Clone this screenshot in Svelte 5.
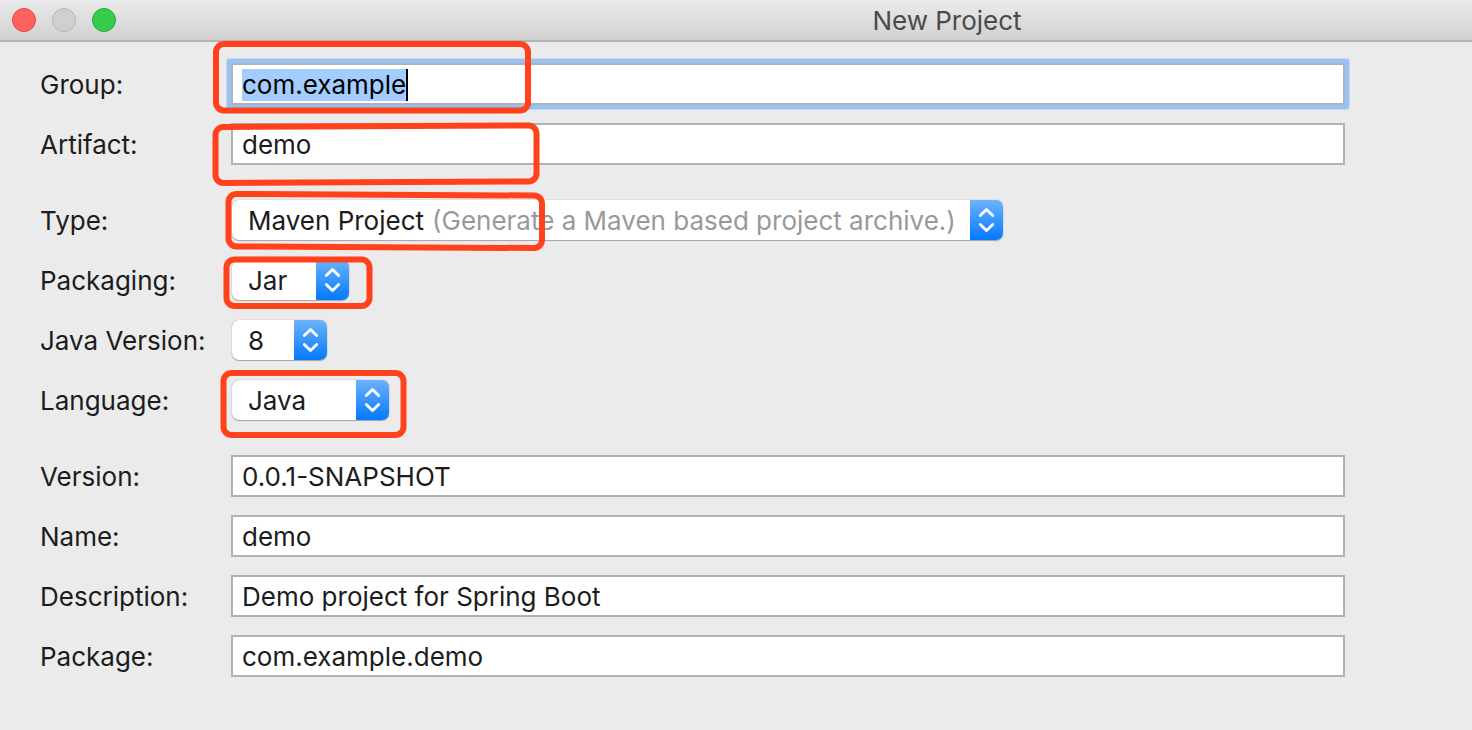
<script>
  import { onMount } from 'svelte';

  let groupInput;

  const choices = [
    { id: 'type', label: 'Type:', value: 'Maven Project', hint: '(Generate a Maven based project archive.)', width: 738 },
    { id: 'packaging', label: 'Packaging:', value: 'Jar', width: 84 },
    { id: 'java-version', label: 'Java Version:', value: '8', width: 62 },
    { id: 'language', label: 'Language:', value: 'Java', width: 124 }
  ];

  const details = [
    { id: 'version', label: 'Version:', value: '0.0.1-SNAPSHOT' },
    { id: 'name', label: 'Name:', value: 'demo' },
    { id: 'description', label: 'Description:', value: 'Demo project for Spring Boot' },
    { id: 'package', label: 'Package:', value: 'com.example.demo' }
  ];

  onMount(() => {
    groupInput.focus();
    groupInput.select();
  });
</script>

<div class="window">
  <header>
    <div class="lights">
      <button class="close" aria-label="Close"></button>
      <button class="minimize" aria-label="Minimize" disabled></button>
      <button class="zoom" aria-label="Zoom"></button>
    </div>
    <h1>New Project</h1>
  </header>

  <form>
    <section>
      <div class="row">
        <label for="group">Group:</label>
        <div class="field focused">
          <input id="group" class="fit" type="text" value="com.example" bind:this={groupInput} />
          <span class="caret"></span>
        </div>
      </div>
      <div class="row">
        <label for="artifact">Artifact:</label>
        <div class="field"><input id="artifact" type="text" value="demo" /></div>
      </div>
    </section>

    <section>
      {#each choices as choice}
        <div class="row">
          <label for={choice.id}>{choice.label}</label>
          <div class="popup">
            <div class="choice" style="width: {choice.width}px">
              <select id={choice.id} class:wide={!choice.hint}>
                <option>{choice.value}</option>
              </select>
              {#if choice.hint}<span class="hint">{choice.hint}</span>{/if}
            </div>
            <svg class="arrows" viewBox="0 0 33 40" aria-hidden="true">
              <path d="M10.300 15.600 L16.500 9.600 L22.700 15.600 M10.300 24.400 L16.500 30.400 L22.700 24.400" />
            </svg>
          </div>
        </div>
      {/each}
    </section>

    <section>
      {#each details as item}
        <div class="row">
          <label for={item.id}>{item.label}</label>
          <div class="field"><input id={item.id} type="text" value={item.value} /></div>
        </div>
      {/each}
    </section>
  </form>

  <svg class="marks" width="560" height="450" viewBox="0 0 560 450" aria-hidden="true">
    <path d="M224 44 H520 A8 8 0 0 1 528 52 V102.500 A8 8 0 0 1 520 110.500 H224 A8 8 0 0 1 216 102.500 V52 A8 8 0 0 1 224 44 Z" />
    <path d="M223.500 127 L528.500 125.500 A8 8 0 0 1 536.500 133.500 V173.500 A8 8 0 0 1 528.500 181.500 L223.500 183 A8 8 0 0 1 215.500 175 V135 A8 8 0 0 1 223.500 127 Z" />
    <path d="M236.500 194 L534 195.500 A8 8 0 0 1 542 203.500 V240 A8 8 0 0 1 534 248 L236.500 246.500 A8 8 0 0 1 228.500 238.500 V202 A8 8 0 0 1 236.500 194 Z" />
    <path d="M234.500 259.500 H361.500 A8 8 0 0 1 369.500 267.500 V298 A8 8 0 0 1 361.500 306 H234.500 A8 8 0 0 1 226.500 298 V267.500 A8 8 0 0 1 234.500 259.500 Z" />
    <path d="M231.500 373 H395.500 A8 8 0 0 1 403.500 381 V427 A8 8 0 0 1 395.500 435 H231.500 A8 8 0 0 1 223.500 427 V381 A8 8 0 0 1 231.500 373 Z" />
  </svg>
</div>

<style>
  :global(body) {
    margin: 0;
    background: #ebebeb;
  }

  .window {
    position: relative;
    min-height: 100vh;
    background: #ebebeb;
    color: #1c1c1c;
    font: 26px/32px Inter, 'Liberation Sans', sans-serif;
  }

  header {
    box-sizing: border-box;
    height: 42px;
    display: flex;
    align-items: center;
    padding-left: 12px;
    background: linear-gradient(#ebebeb, #d1d1d1);
    border-bottom: 2px solid #b3b3b3;
  }

  .lights {
    display: flex;
    gap: 16px;
  }

  .lights button {
    box-sizing: border-box;
    width: 24px;
    height: 24px;
    padding: 0;
    border: 1px solid #b4b4b4;
    border-radius: 50%;
    background: #d0d0d0;
  }

  .lights .close {
    background: #ff625c;
    border-color: #e2463f;
  }

  .lights .zoom {
    background: #35cc4b;
    border-color: #27aa35;
  }

  h1 {
    flex: 1;
    margin: 0;
    padding: 2px 0 0 306px;
    text-align: center;
    font-size: 26px;
    font-weight: 400;
    color: #4a4a4a;
  }

  form {
    display: flex;
    flex-direction: column;
    gap: 34px;
    padding: 21px 127px 40px 40px;
  }

  section {
    display: flex;
    flex-direction: column;
    gap: 18px;
  }

  .row {
    display: grid;
    grid-template-columns: 191px 1fr;
    align-items: center;
    min-height: 42px;
  }

  label {
    padding-top: 2px;
  }

  .field {
    box-sizing: border-box;
    display: flex;
    align-items: center;
    height: 42px;
    padding: 2px 9px 0;
    border: 2px solid #b2b2b2;
    background: #fff;
  }

  .focused {
    box-shadow: 0 0 0 4px #96c3f5, 0 0 0 5px #c0d8f1;
    border-radius: 1px;
  }

  input,
  select {
    padding: 0;
    border: 0;
    outline: 0;
    background: transparent;
    color: inherit;
    font: inherit;
  }

  input {
    flex: 1;
    min-width: 0;
    height: 32px;
  }

  .fit {
    flex: none;
    field-sizing: content;
    color: #000;
    caret-color: transparent;
  }

  .fit::selection {
    background: #a3cdff;
    color: #000;
  }

  .caret {
    width: 2px;
    height: 32px;
    background: #000;
  }

  .popup {
    display: flex;
    justify-self: start;
    height: 40px;
    margin-left: 1px;
    border-radius: 7px;
    overflow: hidden;
    background: #fff;
    box-shadow: 0 0 1px #777, 0 1px 1px #aaa;
  }

  .choice {
    box-sizing: border-box;
    display: flex;
    align-items: center;
    gap: 7px;
    padding: 2px 0 0 16px;
    white-space: nowrap;
  }

  select {
    appearance: none;
  }

  .wide {
    flex: 1;
    min-width: 0;
  }

  .hint {
    color: #999;
  }

  .arrows {
    width: 33px;
    height: 40px;
    background: linear-gradient(#6cb3fb, #0479ff);
  }

  .arrows path {
    fill: none;
    stroke: #fff;
    stroke-width: 2.8;
    stroke-linecap: round;
    stroke-linejoin: round;
  }

  .marks {
    position: absolute;
    top: 0;
    left: 0;
    pointer-events: none;
  }

  .marks path {
    fill: none;
    stroke: #ff411c;
    stroke-width: 6;
  }
</style>
